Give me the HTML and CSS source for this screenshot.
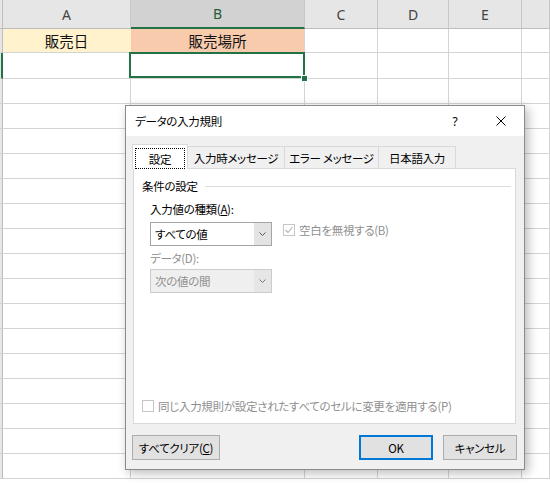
FILE: index.html
```html
<!DOCTYPE html>
<html lang="ja">
<head>
<meta charset="utf-8">
<title>データの入力規則</title>
<link rel="stylesheet" href="styles.css">
</head>
<body>
<div class="sheet">
  <div class="corner"></div><div class="ch">A</div><div class="ch ch-sel">B</div><div class="ch">C</div><div class="ch">D</div><div class="ch">E</div><div class="ch"></div>
  <div class="rh"></div><div class="c c-text fill-y">販売日</div><div class="c c-text fill-p">販売場所</div><div class="c"></div><div class="c"></div><div class="c"></div><div class="c"></div>
  <div class="rh rh-sel"></div><div class="c"></div><div class="c active"><span class="handle"></span></div><div class="c"></div><div class="c"></div><div class="c"></div><div class="c"></div>
  <div class="rh"></div><div class="c"></div><div class="c"></div><div class="c"></div><div class="c"></div><div class="c"></div><div class="c"></div>
  <div class="rh"></div><div class="c"></div><div class="c"></div><div class="c"></div><div class="c"></div><div class="c"></div><div class="c"></div>
  <div class="rh"></div><div class="c"></div><div class="c"></div><div class="c"></div><div class="c"></div><div class="c"></div><div class="c"></div>
  <div class="rh"></div><div class="c"></div><div class="c"></div><div class="c"></div><div class="c"></div><div class="c"></div><div class="c"></div>
  <div class="rh"></div><div class="c"></div><div class="c"></div><div class="c"></div><div class="c"></div><div class="c"></div><div class="c"></div>
  <div class="rh"></div><div class="c"></div><div class="c"></div><div class="c"></div><div class="c"></div><div class="c"></div><div class="c"></div>
  <div class="rh"></div><div class="c"></div><div class="c"></div><div class="c"></div><div class="c"></div><div class="c"></div><div class="c"></div>
  <div class="rh"></div><div class="c"></div><div class="c"></div><div class="c"></div><div class="c"></div><div class="c"></div><div class="c"></div>
  <div class="rh"></div><div class="c"></div><div class="c"></div><div class="c"></div><div class="c"></div><div class="c"></div><div class="c"></div>
  <div class="rh"></div><div class="c"></div><div class="c"></div><div class="c"></div><div class="c"></div><div class="c"></div><div class="c"></div>
  <div class="rh"></div><div class="c"></div><div class="c"></div><div class="c"></div><div class="c"></div><div class="c"></div><div class="c"></div>
  <div class="rh"></div><div class="c"></div><div class="c"></div><div class="c"></div><div class="c"></div><div class="c"></div><div class="c"></div>
  <div class="rh"></div><div class="c"></div><div class="c"></div><div class="c"></div><div class="c"></div><div class="c"></div><div class="c"></div>
  <div class="rh"></div><div class="c"></div><div class="c"></div><div class="c"></div><div class="c"></div><div class="c"></div><div class="c"></div>
  <div class="rh"></div><div class="c"></div><div class="c"></div><div class="c"></div><div class="c"></div><div class="c"></div><div class="c"></div>
  <div class="rh"></div><div class="c"></div><div class="c"></div><div class="c"></div><div class="c"></div><div class="c"></div><div class="c"></div>
</div>

<div class="dialog">
  <div class="titlebar">
    <span class="title">データの入力規則</span>
    <span class="tb-btn">?</span>
    <span class="tb-btn">
      <svg width="10" height="10" viewBox="0 0 10 10"><path d="M0.5 0.5 L9.5 9.5 M9.5 0.5 L0.5 9.5" stroke="#000" stroke-width="1" fill="none"/></svg>
    </span>
  </div>
  <div class="dbody">
    <div class="tabs">
      <div class="tab tab-on"><span class="focus">設定</span></div>
      <div class="tab tab-w1">入力時メッセージ</div>
      <div class="tab tab-w2">エラー メッセージ</div>
      <div class="tab tab-w3">日本語入力</div>
    </div>
    <div class="panel">
      <div class="group-title"><span>条件の設定</span><span class="rule"></span></div>
      <div class="fields">
        <div class="label">入力値の種類(<u>A</u>):</div>
        <div class="combo-row">
          <div class="combo">
            <span class="combo-text">すべての値</span>
            <span class="combo-btn"><svg width="7" height="4" viewBox="0 0 7 4"><polyline points="0.5,0.5 3.5,3.5 6.5,0.5" fill="none" stroke="#555" stroke-width="1"/></svg></span>
          </div>
          <label class="check check-top">
            <span class="box"><svg width="10" height="10" viewBox="0 0 10 10"><polyline points="1.5,5 4,7.5 8.5,2" fill="none" stroke="#b0b0b0" stroke-width="1.1"/></svg></span>
            <span class="dis">空白を無視する(B)</span>
          </label>
        </div>
        <div class="label label2 dis">データ(D):</div>
        <div class="combo combo-dis">
          <span class="combo-text dis">次の値の間</span>
          <span class="combo-btn"><svg width="7" height="4" viewBox="0 0 7 4"><polyline points="0.5,0.5 3.5,3.5 6.5,0.5" fill="none" stroke="#777" stroke-width="1"/></svg></span>
        </div>
      </div>
      <label class="check check-bottom">
        <span class="box"></span>
        <span class="dis">同じ入力規則が設定されたすべてのセルに変更を適用する(P)</span>
      </label>
    </div>
    <div class="buttons">
      <div class="btn btn-clear">すべてクリア(<u>C</u>)</div>
      <div class="spacer"></div>
      <div class="btn btn-ok">OK</div>
      <div class="btn btn-cancel">キャンセル</div>
    </div>
  </div>
</div>
</body>
</html>
```

FILE: styles.css
```css
* { box-sizing: border-box; }
html, body { margin: 0; padding: 0; }
body {
  width: 550px;
  height: 485px;
  overflow: hidden;
  background: #fff;
  position: relative;
  font-family: "Noto Sans CJK JP", sans-serif;
}

/* spreadsheet */
.sheet {
  display: grid;
  grid-template-columns: 3px 128px 174px 73px 71px 73px 1fr;
  grid-template-rows: 29px 24px 26px repeat(17, 25px);
}
.corner {
  background: #e6e6e6;
  border-right: 1px solid #bdbdbd;
  border-bottom: 1px solid #bdbdbd;
}
.ch {
  background: #e6e6e6;
  border-right: 1px solid #c8c8c8;
  border-bottom: 1px solid #bdbdbd;
  display: flex;
  align-items: center;
  justify-content: center;
  font-family: "Noto Sans", sans-serif;
  font-size: 14px;
  color: #444;
}
.ch-sel {
  background: #d2d2d2;
  border-bottom: 2px solid #217346;
  color: #1f5c3a;
}
.rh {
  background: #e6e6e6;
  border-right: 1px solid #bdbdbd;
  border-bottom: 1px solid #d4d4d4;
}
.rh-sel { border-right: 2px solid #217346; }
.c {
  border-right: 1px solid #d4d4d4;
  border-bottom: 1px solid #d4d4d4;
}
.c-text {
  display: flex;
  align-items: center;
  justify-content: center;
  font-size: 14.5px;
  color: #111;
}
.fill-y { background: #fff2cc; border-right-color: #fff2cc; }
.fill-p { background: #f8cbad; }
.active { position: relative; }
.active::after {
  content: "";
  position: absolute;
  top: -1px; left: -2px; right: -1px; bottom: 0;
  border: 2px solid #217346;
}
.handle {
  position: absolute;
  right: -4px;
  bottom: -4px;
  width: 7px;
  height: 7px;
  background: #217346;
  border: 1px solid #fff;
  z-index: 1;
}

/* dialog */
.dialog {
  position: absolute;
  left: 125px;
  top: 105px;
  width: 400px;
  height: 365px;
  border: 1px solid #8a8a8a;
  background: #f0f0f0;
  box-shadow: 3px 3px 10px rgba(0, 0, 0, 0.28);
  display: flex;
  flex-direction: column;
  font-size: 11.5px;
  letter-spacing: -0.3px;
  color: #000;
  font-feature-settings: "palt";
}
.titlebar {
  height: 30px;
  background: #fff;
  display: flex;
  align-items: center;
  padding-left: 9px;
}
.title { flex: 1; }
.tb-btn {
  width: 46px;
  height: 30px;
  display: flex;
  align-items: center;
  justify-content: center;
  font-family: "Noto Sans", sans-serif;
  font-size: 12px;
}
.dbody {
  flex: 1;
  display: flex;
  flex-direction: column;
  padding: 8px 8px 9px 6px;
}
.tabs {
  display: flex;
  align-items: flex-end;
  height: 24px;
}
.tab {
  height: 22px;
  border: 1px solid #d9d9d9;
  border-left: none;
  border-bottom: none;
  display: flex;
  align-items: center;
  justify-content: center;
  white-space: nowrap;
}
.tab-on {
  width: 56px;
  height: 25px;
  margin-bottom: -1px;
  border-left: 1px solid #d9d9d9;
  background: #fff;
  position: relative;
  z-index: 1;
  padding: 4px 3px 1px;
  align-items: stretch;
}
.focus {
  flex: 1;
  outline: 1px dotted #000;
  display: flex;
  align-items: center;
  justify-content: center;
}
.tab-w1 { width: 97px; }
.tab-w2 { width: 94px; }
.tab-w3 { width: 77px; }
.panel {
  margin-left: 1px;
  height: 256px;
  border: 1px solid #d9d9d9;
  background: #fff;
  display: flex;
  flex-direction: column;
  padding: 10px 4px 9px 8px;
}
.group-title {
  display: flex;
  align-items: center;
  line-height: 14px;
}
.rule {
  flex: 1;
  border-top: 1px solid #dcdcdc;
  margin-left: 7px;
}
.fields { margin-left: 8px; }
.label { line-height: 16px; margin-top: 8px; }
.label2 { margin-top: 4px; margin-bottom: 3px; }
.combo-row {
  display: flex;
  align-items: flex-start;
  gap: 11px;
  margin-top: 5px;
}
.combo {
  width: 122px;
  height: 24px;
  border: 1px solid #a5a5a5;
  background: #fff;
  display: flex;
}
.combo-text {
  flex: 1;
  padding-left: 4px;
  line-height: 22px;
}
.combo-btn {
  width: 17px;
  background: #e3e3e3;
  display: flex;
  align-items: center;
  justify-content: center;
}
.combo-dis {
  background: #efefef;
  border-color: #cccccc;
}
.combo-dis .combo-btn { background: #e6e6e6; }
.dis { color: #8f8f8f; }
.check {
  display: flex;
  align-items: center;
  gap: 4px;
  line-height: 16px;
}
.check-top { margin-top: 0; }
.box {
  width: 12px;
  height: 12px;
  border: 1px solid #c6c6c6;
  background: #fff;
  display: flex;
  align-items: center;
  justify-content: center;
}
.check-bottom { margin-top: auto; }
.buttons {
  display: flex;
  margin-top: 11px;
  height: 25px;
  margin-right: -1px;
}
.spacer { flex: 1; }
.btn {
  height: 25px;
  background: #e1e1e1;
  border: 1px solid #adadad;
  display: flex;
  align-items: center;
  justify-content: center;
  white-space: nowrap;
}
.btn-clear { width: 88px; }
.btn-ok {
  width: 74px;
  border: 2px solid #0078d7;
  margin-right: 10px;
}
.btn-cancel { width: 74px; }
```
